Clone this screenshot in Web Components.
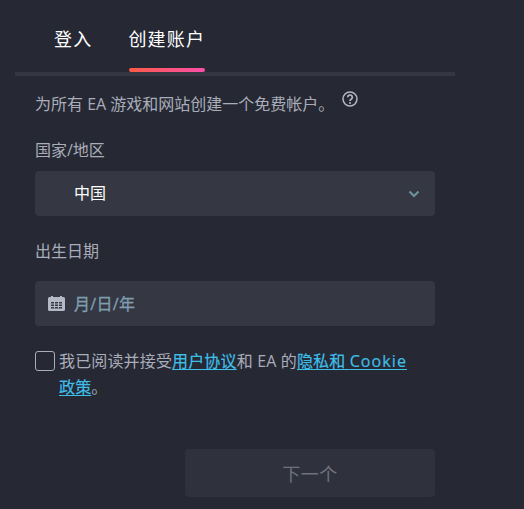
<!DOCTYPE html>
<html lang="zh">
<head>
<meta charset="utf-8">
<title>创建账户</title>
<style>
  html, body { margin: 0; height: 100%; background: #262833; }
  body { font-family: "Open Sans", "Noto Sans CJK SC", sans-serif; color: #a9adba; overflow: hidden; }
</style>
</head>
<body>
<signup-page>
  <tab-bar></tab-bar>
  <signup-form></signup-form>
</signup-page>
<script>
class SignupPage extends HTMLElement {
  constructor() {
    super();
    this.attachShadow({ mode: 'open' });
    this.shadowRoot.innerHTML = `
      <style>
        :host { display: block; width: 440px; margin-left: 15px; }
      </style>
      <slot></slot>
    `;
  }
}

class TabBar extends HTMLElement {
  constructor() {
    super();
    this.attachShadow({ mode: 'open' });
    this.shadowRoot.innerHTML = `
      <style>
        :host { display: flex; height: 72px; border-bottom: 4px solid #343642; gap: 36px; padding-left: 39px; }
        .tab { height: 72px; box-sizing: border-box; padding-top: 25px; font-size: 18px; line-height: 28px; letter-spacing: 1.2px; color: #fff; position: relative; white-space: nowrap; }
        .active::after { content: ""; position: absolute; left: 1px; width: 76px; bottom: 0; height: 4px; border-radius: 2px; background: linear-gradient(90deg, #ff5a47, #fa4fa8); }
      </style>
      <div class="tab">登入</div>
      <div class="tab active">创建账户</div>
    `;
  }
}

class FieldBox extends HTMLElement {
  constructor() {
    super();
    this.attachShadow({ mode: 'open' });
    this.shadowRoot.innerHTML = `
      <style>
        :host { display: block; }
        label { display: block; font-size: 16px; line-height: 24px; color: #a9adba; margin-bottom: var(--label-gap, 9px); }
        .box { display: flex; align-items: center; height: 45px; background: #353743; border-radius: 4px; font-size: 16px; box-sizing: border-box; }
      </style>
      <label><slot name="label"></slot></label>
      <div class="box"><slot></slot></div>
    `;
  }
}

class SignupForm extends HTMLElement {
  constructor() {
    super();
    this.attachShadow({ mode: 'open' });
    this.shadowRoot.innerHTML = `
      <style>
        :host { display: block; width: 400px; padding-left: 20px; }
        .intro { display: flex; margin-top: 16px; font-size: 16px; line-height: 24px; color: #a9adba; }
        .intro svg { margin: -1px 0 0 8px; flex: none; }
        .country { margin-top: 22px; }
        .birth { margin-top: 23px; --label-gap: 18px; }
        .value { flex: 1; padding: 0 0 3px 39px; color: #fff; }
        .chev { margin-right: 15px; }
        .cal { margin: 0 9px 0 13px; flex: none; }
        .date { color: #7f9fb0; -webkit-text-stroke: .3px #7f9fb0; letter-spacing: .3px; padding-bottom: 2px; }
        .terms { display: flex; margin-top: 22px; font-size: 16px; line-height: 26px; color: #a9adba; letter-spacing: .15px; }
        .check { flex: none; box-sizing: border-box; width: 20px; height: 20px; border: 1px solid #a9adba; border-radius: 3px; margin: 3px 4px 0 0; }
        a { color: #3fbfe8; -webkit-text-stroke: .2px #3fbfe8; text-decoration: underline; text-underline-offset: 2px; }
        .latin { letter-spacing: 1.100px; }
        .nb { white-space: nowrap; }
        .actions { display: flex; justify-content: flex-end; margin-top: 49px; }
        button { width: 250px; height: 48px; border: 0; border-radius: 4px; background: #2f313c; color: #6f727d; font: inherit; font-size: 18px; letter-spacing: .5px; }
      </style>
      <div class="intro">
        <span>为所有 EA 游戏和网站创建一个免费帐户。</span>
        <svg width="16" height="16" viewBox="0 0 16 16" fill="none"><circle cx="8" cy="8" r="7" stroke="#b4b7c2" stroke-width="1.5"/><path d="M5.700 6.300a2.300 2.300 0 1 1 3.500 2c-.8.500-1.200.8-1.200 1.700" stroke="#b4b7c2" stroke-width="1.700"/><circle cx="8" cy="12" r="1" fill="#b4b7c2"/></svg>
      </div>
      <field-box class="country">
        <span slot="label">国家/地区</span>
        <span class="value">中国</span>
        <svg class="chev" width="12" height="8" viewBox="0 0 12 8" fill="none"><path d="M1.500 1.500 6 6l4.500-4.500" stroke="#6b929b" stroke-width="2.200"/></svg>
      </field-box>
      <field-box class="birth">
        <span slot="label">出生日期</span>
        <svg class="cal" width="17" height="15" viewBox="0 0 17 15"><path fill-rule="evenodd" fill="#b4b9c6" d="M3 0h2v1h7V0h2v1h1.500A1.500 1.500 0 0 1 17 2.500V13.500A1.500 1.500 0 0 1 15.500 15H1.500A1.500 1.500 0 0 1 0 13.500V2.500A1.500 1.500 0 0 1 1.500 1H3ZM3 6v6.500h11V6Z"/><path fill="#b4b9c6" d="M3 7.500h11v1H3zM3 10h11v1H3zM6 6h1v6.500H6zM10 6h1v6.500h-1z"/></svg>
        <span class="date">月/日/年</span>
      </field-box>
      <div class="terms">
        <div class="check"></div>
        <div>我已阅读并接受<a>用户协议</a>和 EA 的<a>隐私和 <span class="latin">Cookie</span> <span class="nb">政策</span></a>。</div>
      </div>
      <div class="actions"><button disabled>下一个</button></div>
    `;
  }
}

customElements.define('signup-page', SignupPage);
customElements.define('tab-bar', TabBar);
customElements.define('field-box', FieldBox);
customElements.define('signup-form', SignupForm);
</script>
</body>
</html>
